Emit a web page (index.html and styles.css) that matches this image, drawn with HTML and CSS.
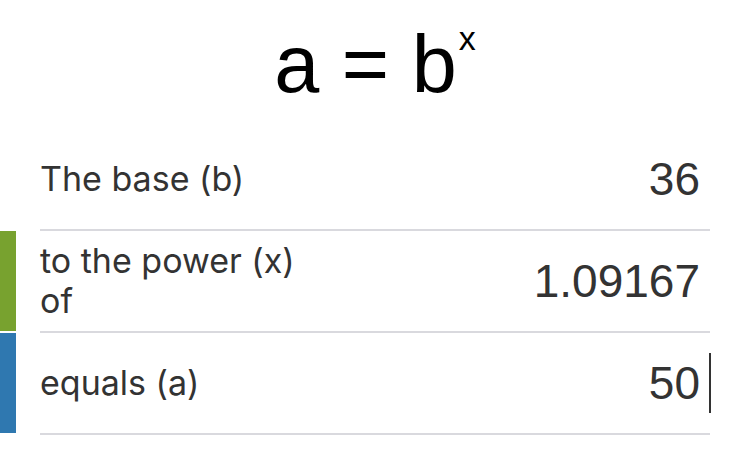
FILE: index.html
```html
<!DOCTYPE html>
<html lang="en">
<head>
  <meta charset="UTF-8">
  <meta name="viewport" content="width=device-width, initial-scale=1.0">
  <title>Power Calculator</title>
  <link rel="stylesheet" href="styles.css">
</head>
<body>
  <header class="formula">
    <span>a = b<sup>x</sup></span>
  </header>

  <section class="rows">
    <div class="row">
      <div class="strip"></div>
      <div class="field">
        <label>The base (b)</label>
        <span class="value">36</span>
      </div>
    </div>
    <div class="row">
      <div class="strip green"></div>
      <div class="field">
        <label>to the power (x)<br>of</label>
        <span class="value">1.09167</span>
      </div>
    </div>
    <div class="row">
      <div class="strip blue"></div>
      <div class="field">
        <label>equals (a)</label>
        <span class="value">50<i class="caret"></i></span>
      </div>
    </div>
  </section>
</body>
</html>
```

FILE: styles.css
```css
* { margin: 0; padding: 0; box-sizing: border-box; }
body { background: #fff; color: #333; font-family: 'Liberation Sans', Arial, sans-serif; width: 750px; }

.formula { height: 129px; display: flex; justify-content: center; align-items: center; color: #000; font-size: 81px; line-height: 1; }
.formula sup { font-size: 34px; vertical-align: 42px; line-height: 0; margin-left: 2px; }

.row { display: flex; align-items: flex-start; }
.strip { width: 16px; height: 100px; flex-shrink: 0; }
.strip.green { background: #78a22f; }
.strip.blue { background: #2f78b0; }

.field { flex: 1; height: 102px; margin: 0 40px 0 24px; border-bottom: 2px solid #d9d9de; display: flex; justify-content: space-between; align-items: center; }
.field label { font-family: Inter, 'Liberation Sans', sans-serif; font-size: 34px; line-height: 40px; color: #333; }
.field .value { font-size: 46px; color: #333; display: flex; align-items: center; margin-right: 10px; }
/* text cursor sits in the right margin so the digits stay aligned */
.caret { display: inline-block; width: 2px; height: 60px; background: #333; margin-left: 9px; margin-right: -11px; }
```
